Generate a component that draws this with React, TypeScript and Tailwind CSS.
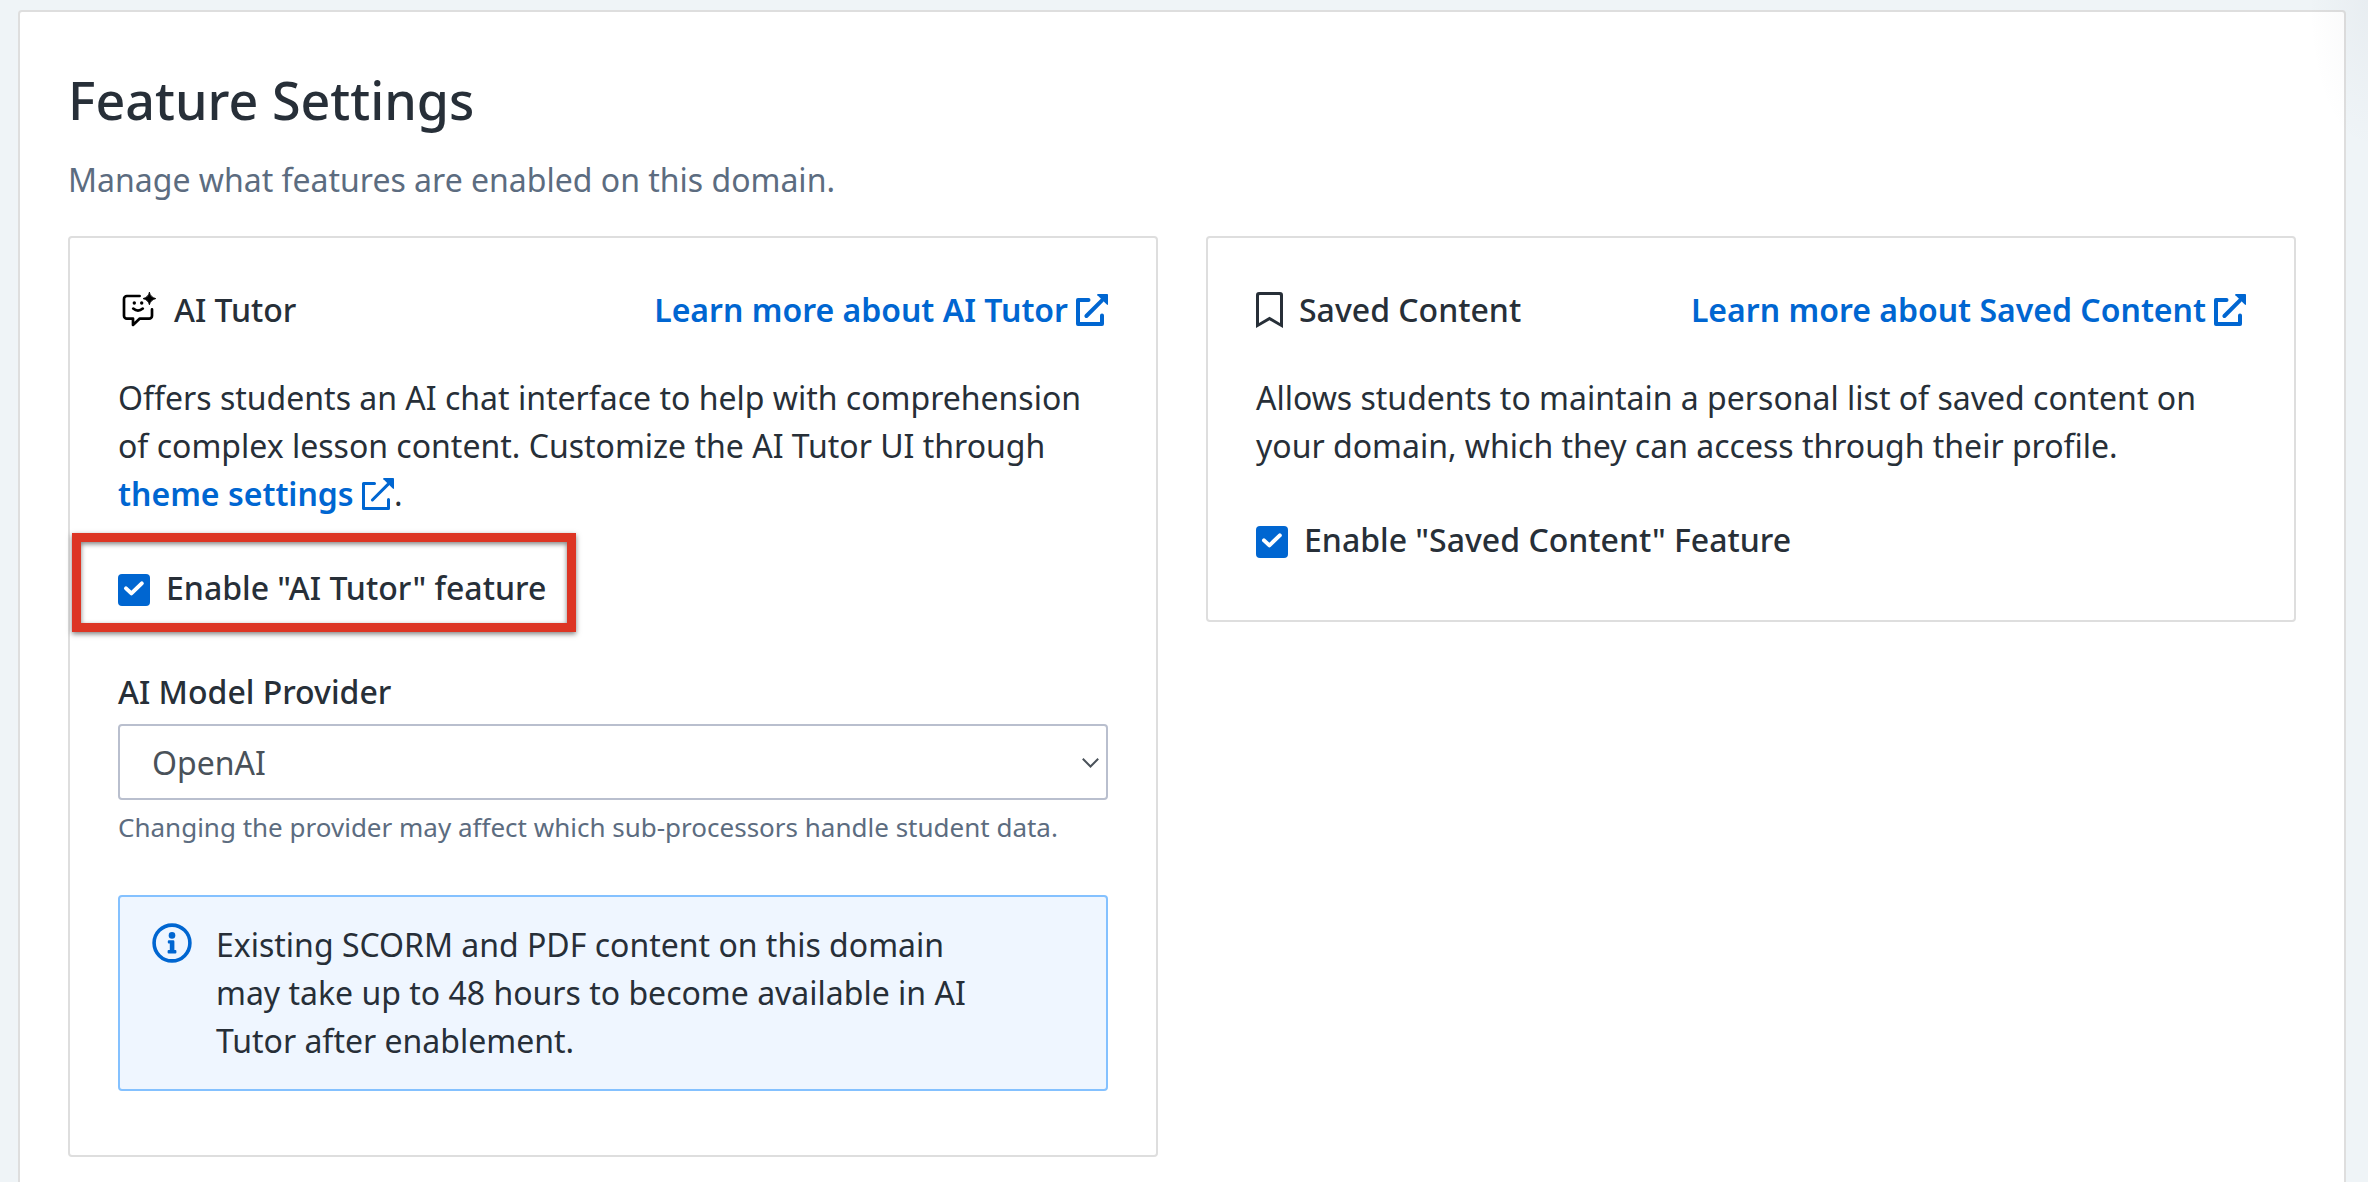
import React from 'react';

interface IconProps {
    className?: string;
}

interface ExternalLinkIconProps extends IconProps {
    strokeWidth: number;
}

const ExternalLinkIcon: React.FC<ExternalLinkIconProps> = ({ strokeWidth, className }) => {
    const inset = strokeWidth / 2;
    return (
        <svg viewBox="0 0 32 32" className={className} fill="none" stroke="currentColor" strokeWidth={strokeWidth} strokeLinecap="round" strokeLinejoin="round">
            <path d={`M12.5 ${4 + inset}H${inset}V${32 - inset}H${28 - inset}V21.5`} />
            <path d="M10.4 22L26 6.4" />
            <path d="M22 0H31.2Q32 0 32 0.8V10Q32 11.6 30.8 10.6L21.4 1.2Q20.6 0 22 0Z" fill="currentColor" stroke="none" />
        </svg>
    );
};

const TutorIcon: React.FC<IconProps> = ({ className }) => (
    <svg viewBox="0 0 35 35" className={className} fill="none" stroke="#000" strokeWidth="2.7" strokeLinecap="round" strokeLinejoin="round">
        <path d="M17.6 4H4.9A2.9 2.9 0 0 0 2 6.9V23.7A2.9 2.9 0 0 0 4.9 26.6H11V33L17.8 26.6H27.1A2.9 2.9 0 0 0 30 23.7V17.4" />
        <path d="M11.2 16.6Q16 20.8 20.8 16.6" />
        <circle cx="12.3" cy="11" r="1.7" fill="#000" stroke="none" />
        <circle cx="19.7" cy="11" r="1.7" fill="#000" stroke="none" />
        <path d="M27.4 0.4Q28.5 5.2 33.8 6.6Q28.5 8 27.4 12.8Q26.3 8 21 6.6Q26.3 5.2 27.4 0.4Z" fill="#000" stroke="#000" strokeWidth="0.8" />
    </svg>
);

const BookmarkIcon: React.FC<IconProps> = ({ className }) => (
    <svg viewBox="0 0 27 36" className={className} fill="currentColor" fillRule="evenodd">
        <path d="M0 36V3Q0 0 3 0H24Q27 0 27 3V36L13.5 28.2ZM3 31L13.5 24.8L24 31V3.8Q24 3 23.2 3H3.8Q3 3 3 3.8Z" />
    </svg>
);

const InfoIcon: React.FC<IconProps> = ({ className }) => (
    <svg viewBox="0 0 40 40" className={className} fill="currentColor">
        <circle cx="20" cy="20" r="17.9" fill="none" stroke="currentColor" strokeWidth="3.6" />
        <circle cx="20" cy="12.4" r="3.3" />
        <path d="M16.8 17.2H21.2Q22.4 17.2 22.4 18.4V27H23.4Q24.4 27 24.4 28V29.4Q24.4 30.4 23.4 30.4H16.6Q15.6 30.4 15.6 29.4V28Q15.6 27 16.6 27H17.8V20.6H16.8Q15.8 20.6 15.8 19.6V18.2Q15.8 17.2 16.8 17.2Z" />
    </svg>
);

interface FeatureCardProps {
    icon: React.ReactNode;
    title: string;
    className?: string;
    children: React.ReactNode;
}

const FeatureCard: React.FC<FeatureCardProps> = ({ icon, title, className, children }) => (
    <section className={`w-[1090px] rounded-[4px] border-2 border-[#dedede] px-12 pt-12 ${className}`}>
        <header className="mb-10 flex h-12 items-center justify-between">
            <h2 className="flex items-center font-medium">
                {icon}
                {title}
            </h2>
            <a className="flex items-center gap-2 font-semibold text-[#0066d1]">
                Learn more about {title}
                <ExternalLinkIcon strokeWidth={4} className="size-8" />
            </a>
        </header>
        {children}
    </section>
);

interface CheckboxProps {
    label: string;
}

const Checkbox: React.FC<CheckboxProps> = ({ label }) => (
    <label className="flex h-12 items-center gap-4 font-medium">
        <span className="mt-1 size-8 rounded-[4px] bg-[#0066d1]">
            <svg viewBox="0 0 32 32" className="size-8" fill="none" stroke="#fff" strokeWidth="4" strokeLinecap="round" strokeLinejoin="round">
                <path d="M8 14.4L13.4 19.4L23.8 9.4" />
            </svg>
        </span>
        {label}
    </label>
);

const App: React.FC = () => {
    return (
        <div className="relative h-[1182px] overflow-hidden bg-[#eff4f7] pt-[10px] pl-[18px] font-['Noto_Sans',sans-serif] text-[32px] leading-[48px] text-[#272f38]">
            <main className="h-[1200px] w-[2328px] rounded-[4px] border-2 border-[#dedede] bg-white px-12 pt-[52px]">
                <h1 className="mb-5 h-[72px] text-[52px] leading-[72px] font-medium">Feature Settings</h1>
                <p className="mb-8 text-[#5c6c80]">Manage what features are enabled on this domain.</p>

                <div className="flex items-start gap-12">
                    <FeatureCard icon={<TutorIcon className="-mt-px mr-[17px] ml-1 size-[35px]" />} title="AI Tutor" className="h-[921px]">
                        <p className="whitespace-nowrap">
                            Offers students an AI chat interface to help with comprehension
                            <br />
                            of complex lesson content. Customize the AI Tutor UI through
                            <br />
                            <a className="font-semibold text-[#0066d1]">
                                theme settings <ExternalLinkIcon strokeWidth={3} className="-mt-1.5 inline size-8" />
                            </a>
                            .
                        </p>

                        <div className="relative mt-[46px]">
                            <Checkbox label={'Enable "AI Tutor" feature'} />
                            <div className="absolute -top-[31px] -left-[46px] h-[99px] w-[504px] border-[9px] border-[#dd3524] shadow-[0_2px_5px_rgba(0,0,0,0.5),inset_0_2px_5px_rgba(0,0,0,0.5)]" />
                        </div>

                        <div className="mt-14">
                            <label className="mb-2 block font-medium">AI Model Provider</label>
                            <div className="flex h-[76px] items-center justify-between rounded-[4px] border-2 border-[#b9bfce] pt-0.5 pr-[7px] pl-8 text-[#4a525a]">
                                OpenAI
                                <svg viewBox="0 0 17 10" className="h-[10px] w-[17px]" fill="none" stroke="currentColor" strokeWidth="2">
                                    <path d="M0.8 0.8L8.5 8.5L16.2 0.8" />
                                </svg>
                            </div>
                            <p className="mt-[7px] h-10 text-[26px] leading-10 text-[#5c6c80]">
                                Changing the provider may affect which sub-processors handle student data.
                            </p>
                        </div>

                        <div className="mt-12 flex rounded-[4px] border-2 border-[#84c1ff] bg-[#eff6ff] px-8 py-6">
                            <InfoIcon className="mt-[2px] mr-6 size-10 text-[#0066d1]" />
                            <p className="w-[780px]">
                                Existing SCORM and PDF content on this domain
                                <br />
                                may take up to 48 hours to become available in AI
                                <br />
                                Tutor after enablement.
                            </p>
                        </div>
                    </FeatureCard>

                    <FeatureCard icon={<BookmarkIcon className="mr-4 h-9 w-[27px]" />} title="Saved Content" className="h-[386px]">
                        <p className="mb-[46px] whitespace-nowrap">
                            Allows students to maintain a personal list of saved content on
                            <br />
                            your domain, which they can access through their profile.
                        </p>
                        <Checkbox label={'Enable "Saved Content" Feature'} />
                    </FeatureCard>
                </div>
            </main>
            {/* faint shade in the top right corner */}
            <div className="absolute top-0 right-0 h-[150px] w-[60px] bg-[radial-gradient(ellipse_at_top_right,rgba(60,70,90,0.04),transparent_70%)]" />
        </div>
    );
};

export default App;
